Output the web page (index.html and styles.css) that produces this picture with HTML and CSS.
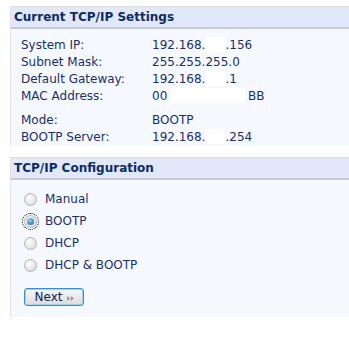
FILE: index.html
```html
<!DOCTYPE html>
<html>
<head>
    <title>TCP/IP Settings</title>
    <link rel="stylesheet" href="styles.css">
</head>
<body>
    <div class="panel">
        <div class="panel-head">Current TCP/IP Settings</div>
        <div class="panel-body info">
            <div class="row"><span class="label">System IP:</span><span>192.168.<span class="hide"></span>.156</span></div>
            <div class="row"><span class="label">Subnet Mask:</span><span>255.255.255.0</span></div>
            <div class="row"><span class="label">Default Gateway:</span><span>192.168.<span class="hide"></span>.1</span></div>
            <div class="row"><span class="label">MAC Address:</span><span>00 <span class="hide mac"></span>BB</span></div>
            <div class="row gap"><span class="label">Mode:</span><span>BOOTP</span></div>
            <div class="row"><span class="label">BOOTP Server:</span><span>192.168.<span class="hide"></span>.254</span></div>
        </div>
    </div>

    <div class="panel second">
        <div class="panel-head">TCP/IP Configuration</div>
        <div class="panel-body config">
            <label class="opt"><span class="radio"></span>Manual</label>
            <label class="opt"><span class="radio checked focus"></span>BOOTP</label>
            <label class="opt"><span class="radio"></span>DHCP</label>
            <label class="opt"><span class="radio"></span>DHCP &amp; BOOTP</label>
            <button type="button" class="btn">Next <span class="arrows">&rsaquo;&rsaquo;</span></button>
        </div>
    </div>
</body>
</html>
```

FILE: styles.css
```css
body { margin: 0; padding: 6px 0 0 10px; background: #fff; color: #1b2f66; font-family: "DejaVu Sans", Verdana, sans-serif; font-size: 12px; }
.panel { background: #f5f9fe; border-top: 1px solid #dedede; border-left: 1px solid #e2e2e2; }
.second { margin-top: 11px; }
.panel-head { height: 20px; line-height: 20px; padding-left: 3px; background: #e0e8f9; border-bottom: 2px solid #c8cbd6; font-weight: bold; font-size: 12px; color: #0e2b62; }
.info { padding: 8px 0 0 10px; }
.row { display: flex; height: 17px; line-height: 17px; }
.row.gap { margin-top: 7px; }
.label { width: 131px; }
.hide { display: inline-block; width: 20px; height: 15px; background: #fff; vertical-align: -3px; }
.hide.mac { width: 74px; margin-right: 3px; }
.config { padding: 8px 0 11px 13px; }
.opt { display: flex; align-items: center; height: 22px; }
.radio { width: 13px; height: 13px; border-radius: 50%; border: 1px solid #b4b4b4; background: radial-gradient(circle at 40% 35%, #fdfdfd, #d4d4d4); margin-right: 8px; box-sizing: border-box; position: relative; }
.radio.checked::after { content: ""; position: absolute; left: 2px; top: 2px; width: 7px; height: 7px; border-radius: 50%; background: radial-gradient(circle at 40% 35%, #8fdaf8, #0a5a9e); }
.radio.focus { outline: 1px dotted #000; outline-offset: 1px; }
.btn { margin-top: 12px; width: 60px; height: 18px; padding: 0; border: 1px solid #3d8dc9; border-radius: 3px; background: linear-gradient(#f6f6f6, #dcdcdc); box-shadow: inset 0 0 0 1px #9ed3f2; font-family: "DejaVu Sans", Verdana, sans-serif; font-size: 12px; color: #111a55; }
.arrows { font-size: 9px; }
```
